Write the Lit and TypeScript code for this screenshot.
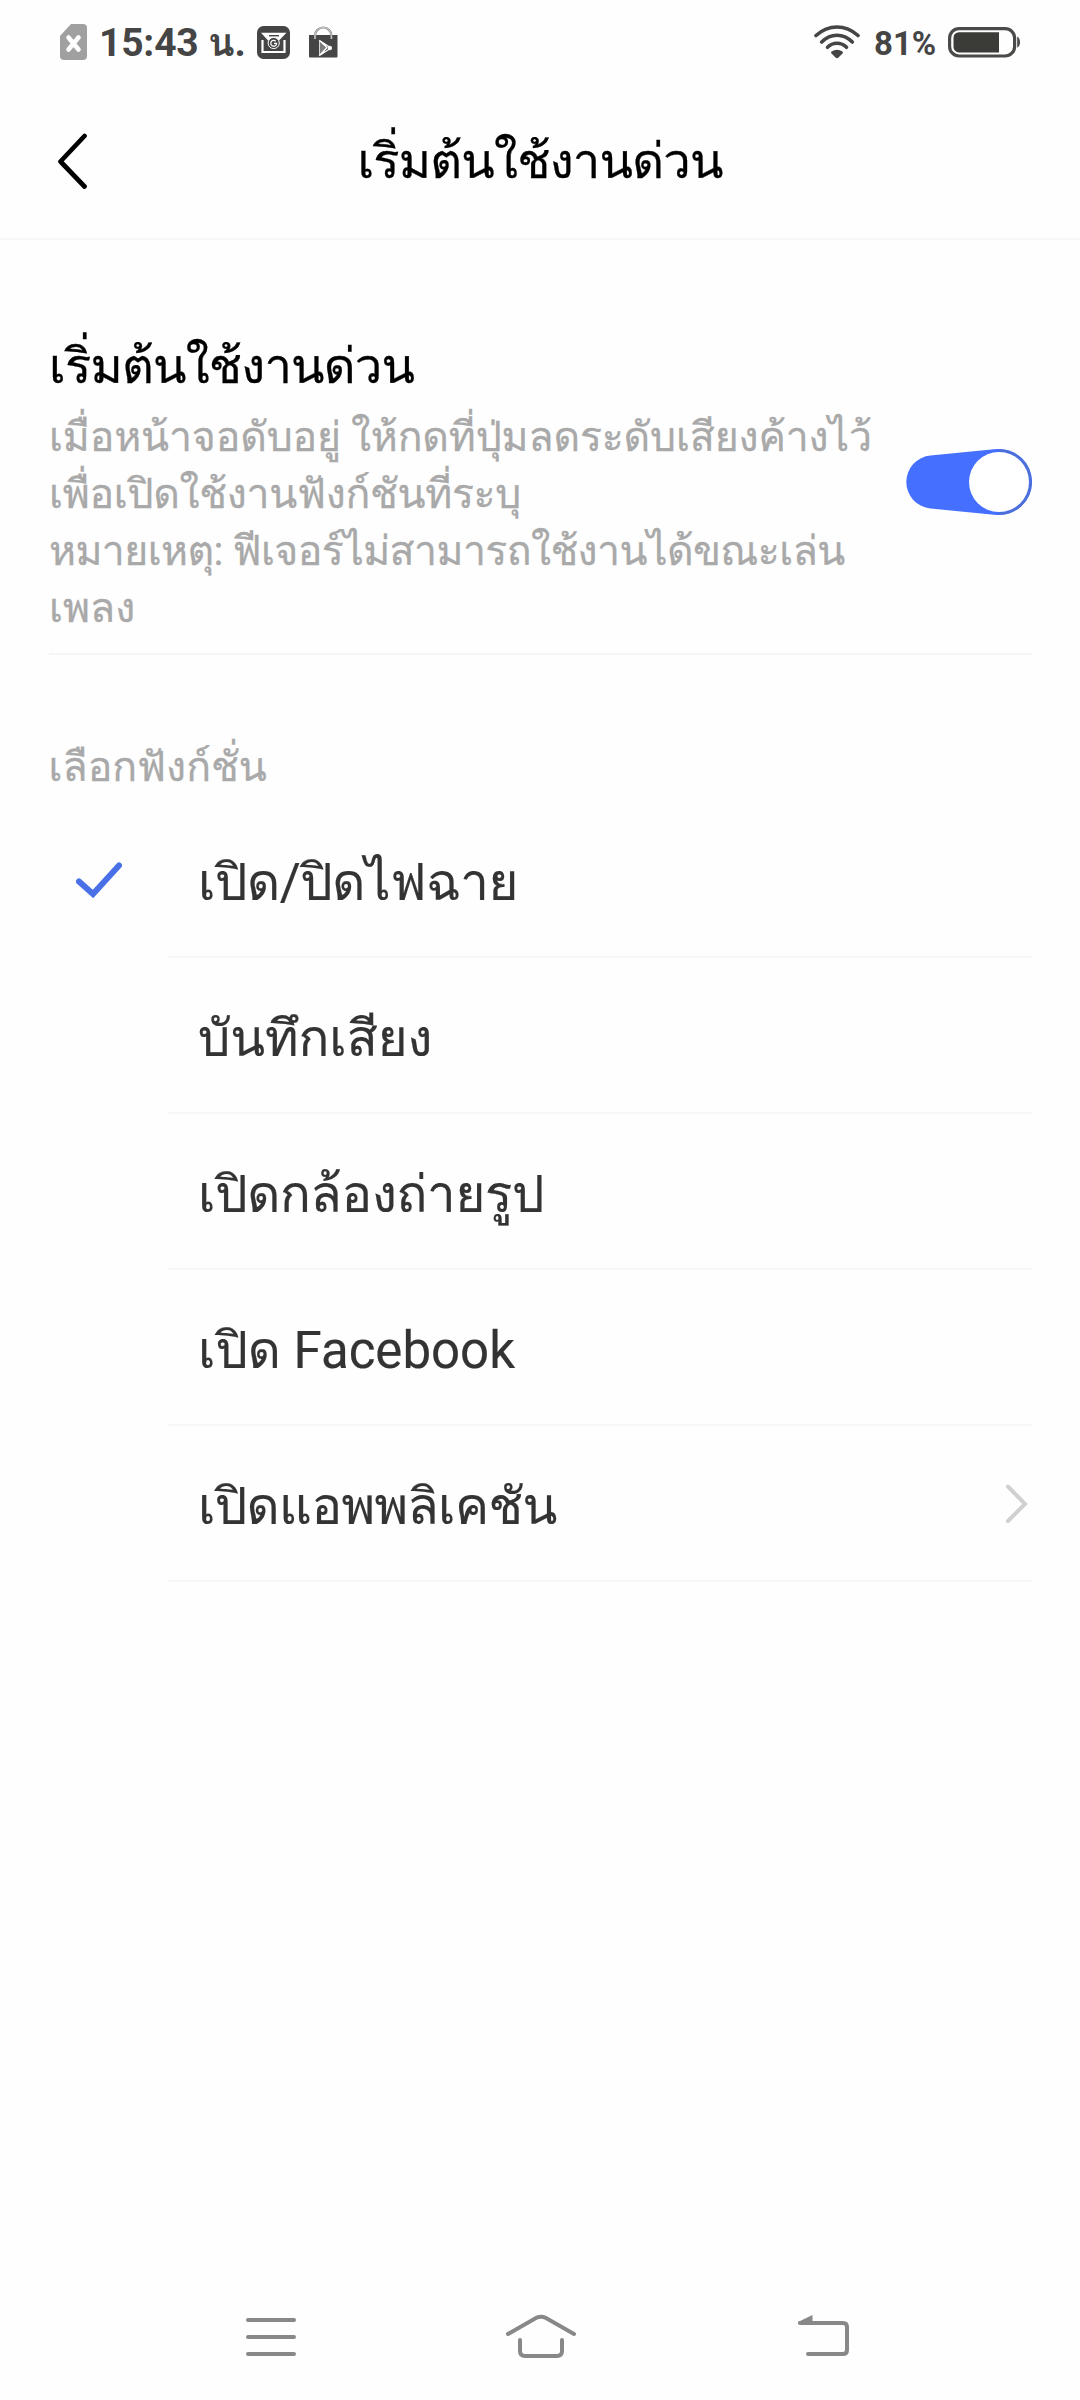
import { LitElement, html, css, svg, nothing } from "lit";
import { customElement, property, state } from "lit/decorators.js";

interface Choice {
  label: string;
  tracking: string;
  opensList?: boolean;
}

const CHOICES: Choice[] = [
  { label: "เปิด/ปิดไฟฉาย", tracking: "t4" },
  { label: "บันทึกเสียง", tracking: "t1" },
  { label: "เปิดกล้องถ่ายรูป", tracking: "t3" },
  { label: "เปิด Facebook", tracking: "t0" },
  { label: "เปิดแอพพลิเคชัน", tracking: "t5", opensList: true },
];

const DESCRIPTION = [
  { text: "เมื่อหน้าจอดับอยู่ ให้กดที่ปุ่มลดระดับเสียงค้างไว้", tracking: "t2" },
  { text: "เพื่อเปิดใช้งานฟังก์ชันที่ระบุ", tracking: "t3" },
  { text: "หมายเหตุ: ฟีเจอร์ไม่สามารถใช้งานได้ขณะเล่น", tracking: "t5" },
  { text: "เพลง", tracking: "t0" },
];

@customElement("status-bar")
class StatusBar extends LitElement {
  static styles = css`
    :host { display: flex; height: 84px; align-items: center; color: #454545; box-sizing: border-box; padding: 0 60px; }
    svg { display: block; flex: none; }
    .time { font-size: 39px; font-weight: 700; line-height: 81px; padding-top: 3px; margin-left: 12px; width: 158px; letter-spacing: -0.2px; white-space: nowrap; }
    .bag { margin-left: 18.5px; }
    .gap { flex: 1; }
    .pct { font-size: 33px; font-weight: 700; line-height: 81px; padding-top: 3px; margin-left: 14px; width: 74px; white-space: nowrap; }
  `;
  render() {
    return html`
      <svg width="27" height="36" viewBox="0 0 27 36">
        <path d="M11 0H23a4 4 0 0 1 4 4V32a4 4 0 0 1-4 4H4a4 4 0 0 1-4-4V12Z" fill="#a0a0a0" />
        <path d="M8.500 13.500 18.500 25.500M18.500 13.500 8.500 25.500" stroke="#fefefe" stroke-width="4.600" stroke-linecap="round" />
      </svg>
      <span class="time">15:43 น.</span>
      <svg width="33" height="33" viewBox="0 0 33 33">
        <rect width="33" height="33" rx="6.500" fill="#454545" />
        <path d="M5.500 14V26H27.500V14" fill="none" stroke="#fefefe" stroke-width="2.200" />
        <path d="M4 6.800H29.500L22 14.500H11Z" fill="#fefefe" />
        <path d="M12 9.700H22" stroke="#454545" stroke-width="1.400" />
        <circle cx="16.700" cy="17" r="5.600" fill="#454545" stroke="#fefefe" stroke-width="1" />
        <path d="M18.700 15.200A2.900 2.900 0 1 0 19.600 17.400H17" fill="none" stroke="#fefefe" stroke-width="1.200" />
      </svg>
      <svg class="bag" width="29" height="32" viewBox="0 0 29 32">
        <path d="M0 9H28.500V30.500a1 1 0 0 1-1 1H1a1 1 0 0 1-1-1Z" fill="#454545" />
        <path d="M6 13V9.500a8.200 8 0 0 1 16.400 0V13" fill="none" stroke="#8e8e8e" stroke-width="2.200" />
        <path d="M6 13V9.500a8.200 8 0 0 1 16.400 0V13" fill="none" stroke="#e4e4e4" stroke-width=".7" />
        <path d="M10.500 14V29.500L22 21.500Z" fill="#7c7c7c" />
        <path d="M10.500 14.500 22 22 10.500 29.500 18 21.500Z" fill="#454545" stroke="#fefefe" stroke-width="1.300" stroke-linejoin="round" />
        <path d="M10.500 14.500V29.500" stroke="#d8d8d8" stroke-width="1" />
        <circle cx="20.800" cy="22" r="2.200" fill="#fefefe" />
      </svg>
      <span class="gap"></span>
      <svg width="46" height="34" viewBox="0 0 46 34">
        <g fill="none" stroke="#454545" stroke-width="3.600" stroke-linecap="round">
          <path d="M2 10.500Q11.500 2 23 2T44 10.500" />
          <path d="M7.700 17Q14.500 10.200 23 10.200T38.300 17" />
          <path d="M13.500 22.300Q17.500 18.300 23 18.300T32.500 22.300" />
        </g>
        <path d="M17.500 26.500Q23 23 28.500 26.500Q29.500 27.500 28.500 28.500L24.500 32.500Q23 34 21.500 32.500L17.500 28.500Q16.500 27.500 17.500 26.500Z" fill="#454545" />
      </svg>
      <span class="pct">81%</span>
      <svg width="72" height="31" viewBox="0 0 72 31">
        <rect x="1.600" y="1.600" width="65" height="27.400" rx="9.500" fill="none" stroke="#4a4a48" stroke-width="3.200" />
        <path d="M51 5.200V25.400H11a5.500 5.500 0 0 1-5.500-5.500V10.700a5.500 5.500 0 0 1 5.500-5.500Z" fill="#3b3b38" />
        <path d="M69.200 9.500Q72 11 72 15.100T69.200 20.700Z" fill="#4a4a48" />
      </svg>
    `;
  }
}

@customElement("toggle-switch")
class ToggleSwitch extends LitElement {
  @property({ type: Boolean }) on = false;
  static styles = css`
    :host { display: block; width: 126px; height: 66px; }
    svg { display: block; }
  `;
  render() {
    return this.on
      ? html`<svg width="126" height="66" viewBox="0 0 126 66">
          <path d="M24.500 6.600 90.500.1A33 33 0 1 1 90.500 65.900L24.500 59.400A26.500 26.500 0 0 1 24.500 6.600Z" fill="#456fff" />
          <circle cx="93" cy="33" r="31.500" fill="none" stroke="#4e6fd6" stroke-width="2.500" stroke-dasharray="99 99" transform="rotate(-90 93 33)" />
          <circle cx="93" cy="33" r="30" fill="#fff" />
        </svg>`
      : html`<svg width="126" height="66" viewBox="0 0 126 66">
          <rect x="1" y="6" width="124" height="54" rx="27" fill="#ddd" />
          <circle cx="33" cy="33" r="30" fill="#fff" />
        </svg>`;
  }
}

@customElement("nav-keys")
class NavKeys extends LitElement {
  static styles = css`
    :host { display: grid; grid-template-columns: 259.5px 292.5px 52px; height: 50px; padding-left: 246px; }
    svg { display: block; }
  `;
  render() {
    const wrap = (w: number, body: unknown) => html`<svg width=${w} height="50" viewBox="0 0 ${w} 50" fill="none" stroke="#888" stroke-width="4" stroke-linecap="round">${body}</svg>`;
    return html`
      ${wrap(50, svg`<path d="M2 10H48M2 27H48M2 44H48" />`)}
      ${wrap(70, svg`<path d="M2 24 30 8Q35 5.500 40 8L68 24M14 30V41Q14 46 19 46H51Q56 46 56 41V30" />`)}
      ${wrap(52, svg`<path d="M2 13H45Q49 13 49 17V40Q49 44 45 44H10" /><path d="M14.500 5V14H0V12Z" fill="#888" stroke="none" />`)}
    `;
  }
}

@customElement("app-root")
class AppRoot extends LitElement {
  @state() private selected = 0;

  static styles = css`
    :host {
      display: flex; flex-direction: column; box-sizing: border-box; width: 1080px; height: 2400px;
      background: #fefefe; font-family: Roboto, Loma, sans-serif; overflow: hidden;
    }
    svg { display: block; flex: none; }
    .header { display: grid; grid-template-columns: 87px 1fr 87px; align-items: center; height: 156px; box-sizing: border-box; border-bottom: 2px solid #f7f7f7; }
    .back { justify-self: end; }
    .title, .name { margin: 0; font-size: 49px; font-weight: 400; line-height: 80px; letter-spacing: -0.8px; color: #000; -webkit-text-stroke: 0.3px; }
    .title { text-align: center; padding-top: 2px; }
    .quick { display: flex; align-items: flex-start; margin: 87px 48px 0 49px; height: 328px; box-sizing: border-box; border-bottom: 2px solid #f6f6f6; }
    .copy { flex: 1; white-space: nowrap; }
    .name { padding-bottom: 2px; }
    .line { font-size: 41px; line-height: 57px; height: 57px; color: #a9a9a9; -webkit-text-stroke: 0.3px; }
    toggle-switch { margin-top: 122px; }
    .caption { margin: 80px 0 0 48.5px; font-size: 41px; line-height: 64px; height: 64px; color: #a9a9a9; -webkit-text-stroke: 0.3px; }
    .rows { display: flex; flex-direction: column; margin: 3px 48px 0 0; }
    .row { display: flex; align-items: center; height: 156px; }
    .mark { width: 92px; padding-left: 76px; }
    .body { flex: 1; display: flex; align-items: center; justify-content: space-between; height: 156px; box-sizing: border-box; border-bottom: 2px solid #f6f6f6; padding: 0 3px 0 30px; }
    .label { font-size: 51px; line-height: 80px; padding-top: 7px; color: #333; -webkit-text-stroke: 0.2px; }
    .t0 { letter-spacing: 0; }
    .t1 { letter-spacing: -0.1px; }
    .t2 { letter-spacing: -0.15px; }
    .t3 { letter-spacing: -0.3px; }
    .t4 { letter-spacing: -0.4px; }
    .t5 { letter-spacing: -0.6px; }
    .fill { flex: 1; }
    nav-keys { margin-bottom: 40px; }
  `;

  render() {
    return html`
      <status-bar></status-bar>
      <header class="header">
        <svg class="back" width="31" height="56" viewBox="0 0 31 56"><path d="M28.500 3 4.500 28.500 28.500 53.500" fill="none" stroke="#000" stroke-width="4.700" stroke-linecap="round" stroke-linejoin="round" /></svg>
        <h1 class="title">เริ่มต้นใช้งานด่วน</h1>
      </header>
      <section class="quick">
        <div class="copy">
          <h2 class="name">เริ่มต้นใช้งานด่วน</h2>
          ${DESCRIPTION.map((d) => html`<div class="line ${d.tracking}">${d.text}</div>`)}
        </div>
        <toggle-switch on></toggle-switch>
      </section>
      <div class="caption">เลือกฟังก์ชั่น</div>
      <div class="rows">
        ${CHOICES.map(
          (c, i) => html`<div class="row" @click=${() => (this.selected = i)}>
            <div class="mark">
              ${i === this.selected
                ? html`<svg width="46" height="36" viewBox="0 0 46 36"><path d="M3 19.500 17 32 43 3.500" fill="none" stroke="#4a70e8" stroke-width="6" stroke-linecap="round" /></svg>`
                : nothing}
            </div>
            <div class="body">
              <span class="label ${c.tracking}">${c.label}</span>
              ${c.opensList
                ? html`<svg width="24" height="40" viewBox="0 0 24 40"><path d="M3 3.500 20 21 3 38" fill="none" stroke="#d0d0d0" stroke-width="4" stroke-linecap="round" /></svg>`
                : nothing}
            </div>
          </div>`
        )}
      </div>
      <div class="fill"></div>
      <nav-keys></nav-keys>
    `;
  }
}
